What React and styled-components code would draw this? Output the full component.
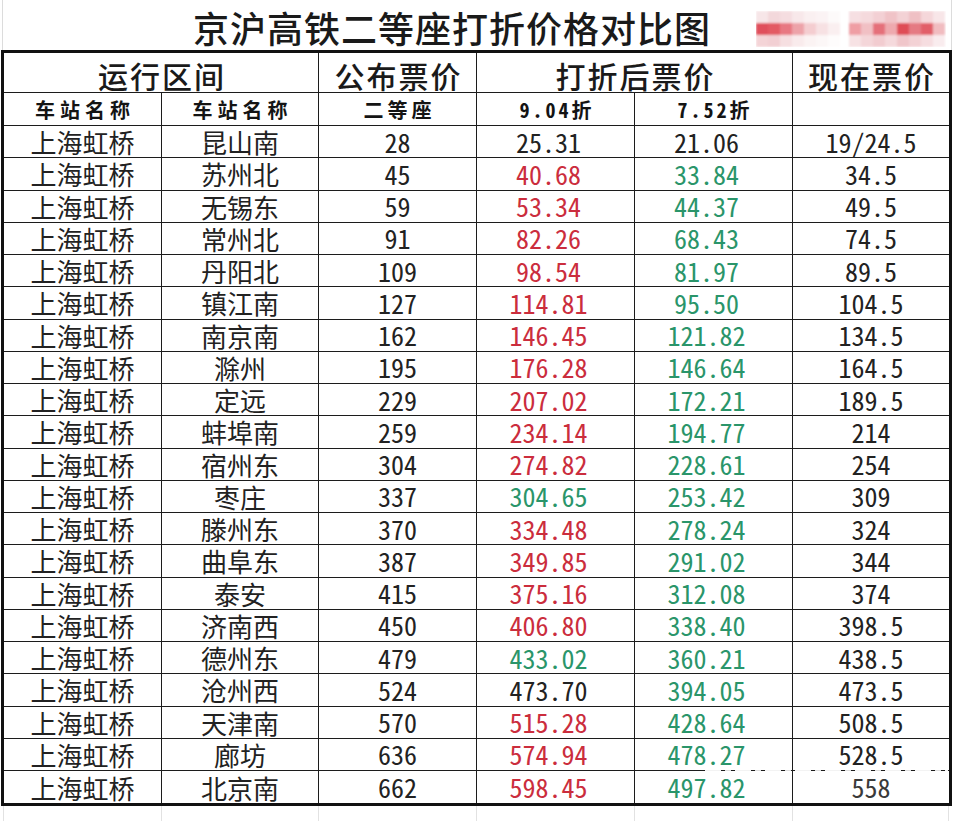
import React from 'react'
import styled, { createGlobalStyle } from 'styled-components'

const GlobalStyle = createGlobalStyle`
  html, body {
    margin: 0;
    padding: 0;
    background: #fff;
  }
  body {
    font-family: "Noto Sans CJK SC", "Noto Sans", sans-serif;
    color: #1e1e1e;
  }
`

const COLS = '158px 157px 158px 158px 158px 156px'

const Sheet = styled.div`
  position: relative;
  width: 961px;
  height: 821px;
  overflow: hidden;
`

const TitleRow = styled.div`
  display: flex;
  align-items: center;
  height: 50px;
  margin: 0 9px 0 2px;
  border-left: 1px solid #dcdcdc;
  border-right: 1px solid #dcdcdc;
  box-sizing: border-box;
`

const Title = styled.h1`
  margin: 0;
  padding: 3px 0 0 190px;
  font-size: 36px;
  font-weight: 500;
  letter-spacing: 1px;
  line-height: 1;
  color: #1a1a1a;
  white-space: nowrap;
`

const Mosaic = styled.svg`
  flex: none;
  margin: 8px 0 0 45px;
`

const Grid = styled.div`
  display: grid;
  grid-template-columns: ${COLS};
  grid-template-rows: 40px 33px;
  grid-auto-rows: 32.25px;
  margin-left: 1px;
  width: 951px;
  box-sizing: border-box;
  border: 3px solid #111;
`

const Cell = styled.div`
  display: flex;
  align-items: center;
  justify-content: center;
  box-sizing: border-box;
  border-right: ${p => (p.$last ? 'none' : '1px solid #1c1c1c')};
  border-bottom: ${p => (p.$bottom ? 'none' : '1px solid #1c1c1c')};
  grid-column: ${p => (p.$span ? `span ${p.$span}` : 'auto')};
  white-space: nowrap;
`

const HeadText = styled.span`
  font-size: 30px;
  font-weight: 500;
  letter-spacing: 2px;
  padding-left: 2px;
  line-height: 1;
  margin-top: 4px;
  color: #1a1a1a;
`

const SubText = styled.span`
  font-size: 20px;
  font-weight: 700;
  letter-spacing: ${p => p.$spacing || 5}px;
  padding-left: ${p => p.$spacing || 5}px;
  line-height: 1;
  margin-top: 2px;
  color: #141414;
  font-feature-settings: "hwid";
`

const NameText = styled.span`
  font-size: 26px;
  line-height: 1;
  margin-top: 1px;
  color: #222;
`

const NumText = styled.span`
  font-size: 26px;
  line-height: 1;
  font-feature-settings: "hwid";
  padding-right: ${p => (p.$shift ? 14 : 0)}px;
  color: ${p => (p.$tone === 'red' ? '#cb2d3d' : p.$tone === 'green' ? '#2a956a' : p.$tone === 'faded' ? '#3a3a3a' : '#222')};
`

const Footer = styled.div`
  display: grid;
  grid-template-columns: ${COLS};
  margin-left: 3px;
  height: 16px;
  border-left: 1px solid #e2e2e2;
`

const FooterCell = styled.div`
  border-right: 1px solid #e2e2e2;
`

const Streak = styled.div`
  position: absolute;
  top: 770px;
  left: 705px;
  width: 243px;
  height: 2px;
  background: repeating-linear-gradient(90deg, rgba(255,255,255,0.95) 0 16px, transparent 16px 20px, rgba(255,255,255,0.85) 20px 26px, transparent 26px 30px);
`

const rows = [
  ['昆山南', '28', '25.31', '21.06', '19/24.5', '', ''],
  ['苏州北', '45', '40.68', '33.84', '34.5', 'red', 'green'],
  ['无锡东', '59', '53.34', '44.37', '49.5', 'red', 'green'],
  ['常州北', '91', '82.26', '68.43', '74.5', 'red', 'green'],
  ['丹阳北', '109', '98.54', '81.97', '89.5', 'red', 'green'],
  ['镇江南', '127', '114.81', '95.50', '104.5', 'red', 'green'],
  ['南京南', '162', '146.45', '121.82', '134.5', 'red', 'green'],
  ['滁州', '195', '176.28', '146.64', '164.5', 'red', 'green'],
  ['定远', '229', '207.02', '172.21', '189.5', 'red', 'green'],
  ['蚌埠南', '259', '234.14', '194.77', '214', 'red', 'green'],
  ['宿州东', '304', '274.82', '228.61', '254', 'red', 'green'],
  ['枣庄', '337', '304.65', '253.42', '309', 'green', 'green'],
  ['滕州东', '370', '334.48', '278.24', '324', 'red', 'green'],
  ['曲阜东', '387', '349.85', '291.02', '344', 'red', 'green'],
  ['泰安', '415', '375.16', '312.08', '374', 'red', 'green'],
  ['济南西', '450', '406.80', '338.40', '398.5', 'red', 'green'],
  ['德州东', '479', '433.02', '360.21', '438.5', 'green', 'green'],
  ['沧州西', '524', '473.70', '394.05', '473.5', '', 'green'],
  ['天津南', '570', '515.28', '428.64', '508.5', 'red', 'green'],
  ['廊坊', '636', '574.94', '478.27', '528.5', 'red', 'green'],
  ['北京南', '662', '598.45', '497.82', '558', 'red', 'green'],
]

const mosaic = [
  { x: 0, rows: [
    ['#f7e6e8', '#f3d8db', '#f5dde0', '#f8e8ea', '#faf0f1', '#fbf3f4', '#fdfafa'],
    ['#e0505b', '#e35a64', '#e87882', '#eda3a9', '#f4cdd0', '#f7e1e3', '#faeff0'],
    ['#f4d4d7', '#f2cfd3', '#f6dfe1', '#f9ebec', '#fbf3f3', '#fcf7f7', '#fefcfc'],
  ] },
  { x: 93, rows: [
    ['#f6dfe2', '#f5dadd', '#f3d0d4', '#f0c3c7', '#f3d2d5', '#efc0c4', '#f5d7da', '#f8e6e8'],
    ['#ef9ea4', '#f1c0c4', '#e5707a', '#eea9ae', '#df4d57', '#e57a83', '#e25f69', '#f1bcc0'],
    ['#f7e2e4', '#f4d6d9', '#f2ccd0', '#f5d9dc', '#f0c6ca', '#f3d2d5', '#f6dde0', '#f9ecee'],
  ] },
]

function BlurredMark () {
  return (
    <Mosaic width='190' height='36' viewBox='0 0 190 36'>
      <defs>
        <filter id='soft'>
          <feGaussianBlur stdDeviation='0.8' />
        </filter>
      </defs>
      <g filter='url(#soft)'>
        {mosaic.map(group => group.rows.map((line, r) => line.map((c, i) => (
          <rect key={`${group.x}-${r}-${i}`} x={group.x + i * 12} y={r * 12} width='12' height='12' fill={c} />
        ))))}
      </g>
    </Mosaic>
  )
}

export default function App () {
  const lastRow = rows.length - 1
  return (
    <Sheet>
      <GlobalStyle />
      <TitleRow>
        <Title>京沪高铁二等座打折价格对比图</Title>
        <BlurredMark />
      </TitleRow>
      <Grid>
        <Cell $span={2}><HeadText>运行区间</HeadText></Cell>
        <Cell><HeadText>公布票价</HeadText></Cell>
        <Cell $span={2}><HeadText>打折后票价</HeadText></Cell>
        <Cell $last><HeadText>现在票价</HeadText></Cell>

        <Cell><SubText>车站名称</SubText></Cell>
        <Cell><SubText>车站名称</SubText></Cell>
        <Cell><SubText $spacing={4}>二等座</SubText></Cell>
        <Cell><SubText $spacing={3}>9.04折</SubText></Cell>
        <Cell><SubText $spacing={3}>7.52折</SubText></Cell>
        <Cell $last />

        {rows.map(([to, base, d1, d2, now, t1, t2], i) => {
          const b = i === lastRow
          return (
            <React.Fragment key={to}>
              <Cell $bottom={b}><NameText>上海虹桥</NameText></Cell>
              <Cell $bottom={b}><NameText>{to}</NameText></Cell>
              <Cell $bottom={b}><NumText>{base}</NumText></Cell>
              <Cell $bottom={b}><NumText $shift $tone={t1}>{d1}</NumText></Cell>
              <Cell $bottom={b}><NumText $shift $tone={t2}>{d2}</NumText></Cell>
              <Cell $bottom={b} $last><NumText $tone={b ? 'faded' : ''}>{now}</NumText></Cell>
            </React.Fragment>
          )
        })}
      </Grid>
      <Footer>
        {[0, 1, 2, 3, 4, 5].map(n => <FooterCell key={n} />)}
      </Footer>
      <Streak />
    </Sheet>
  )
}
